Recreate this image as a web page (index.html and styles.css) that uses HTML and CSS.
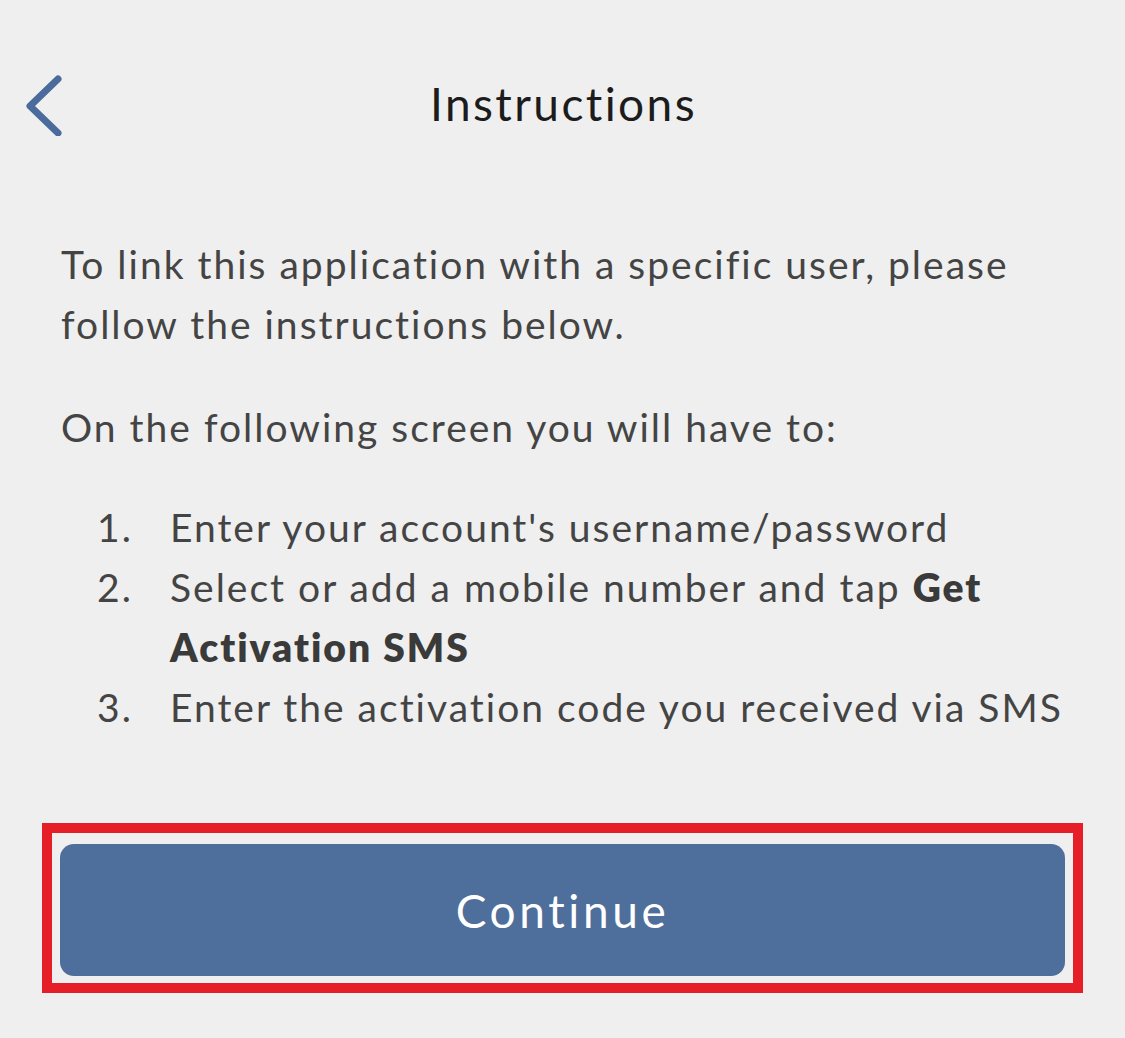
FILE: index.html
```html
<!DOCTYPE html>
<html lang="en">

<head>
    <meta charset="UTF-8">
    <meta name="viewport" content="width=device-width, initial-scale=1.0">
    <title>Instructions</title>
    <link rel="stylesheet" href="styles.css">
</head>

<body>
    <div class="screen">
        <div class="navbar">
            <a href="#!" class="back" aria-label="Back">
                <svg width="44" height="64" viewBox="0 0 44 64">
                    <path d="M34 7 L6 34 L34 61" fill="none" stroke="#4a6b9b" stroke-width="7"
                        stroke-linecap="round" stroke-linejoin="round" />
                </svg>
            </a>
            <span class="title">Instructions</span>
        </div>

        <div class="content">
            <p class="text">To link this application with a specific user, please follow the instructions below.</p>
            <p class="text second">On the following screen you will have to:</p>
            <ol class="steps">
                <li><span>Enter your account's username/password</span></li>
                <li><span>Select or add a mobile number and tap <b>Get Activation SMS</b></span></li>
                <li><span>Enter the activation code you received via SMS</span></li>
            </ol>
        </div>

        <div class="highlight">
            <button class="continue">Continue</button>
        </div>
    </div>
</body>

</html>
```

FILE: styles.css
```css
body {
    margin: 0;
    background-color: #efefef;
    font-family: Lato, "Open Sans", sans-serif;
    color: #444;
}

.screen {
    width: 1125px;
    height: 1038px;
}

.navbar {
    position: relative;
    height: 206px;
    display: flex;
    align-items: center;
    justify-content: center;
}

.back {
    position: absolute;
    left: 24px;
    top: 72px;
    display: block;
}

.title {
    font-size: 46px;
    color: #1c1c1c;
    letter-spacing: 2.4px;
    padding-left: 2px;
}

.content {
    padding: 0 40px 0 61px;
}

.text {
    margin: 28px 0 0 0;
    font-size: 39px;
    line-height: 60px;
    letter-spacing: 2px;
}

.text.second {
    margin-top: 43px;
}

.steps {
    margin: 40px 0 0 0;
    padding: 0 0 0 36px;
    list-style: none;
    counter-reset: step;
    font-size: 39px;
    line-height: 60px;
    letter-spacing: 2px;
}

.steps li {
    display: grid;
    grid-template-columns: 73px 1fr;
    counter-increment: step;
}

.steps li::before {
    content: counter(step) ".";
}

.steps b {
    font-weight: 800;
    color: #3a3a3a;
    letter-spacing: 2px;
}

.highlight {
    box-sizing: border-box;
    margin: 86px 0 0 42px;
    width: 1041px;
    border: 10px solid #e61e27;
    padding: 11px 8px 7px 8px;
}

.continue {
    display: block;
    width: 100%;
    height: 132px;
    border: none;
    border-radius: 14px;
    background-color: #4e6e9b;
    color: #fff;
    font-family: Lato, "Open Sans", sans-serif;
    font-size: 46px;
    letter-spacing: 3.6px;
    padding-left: 6px;
}
```
